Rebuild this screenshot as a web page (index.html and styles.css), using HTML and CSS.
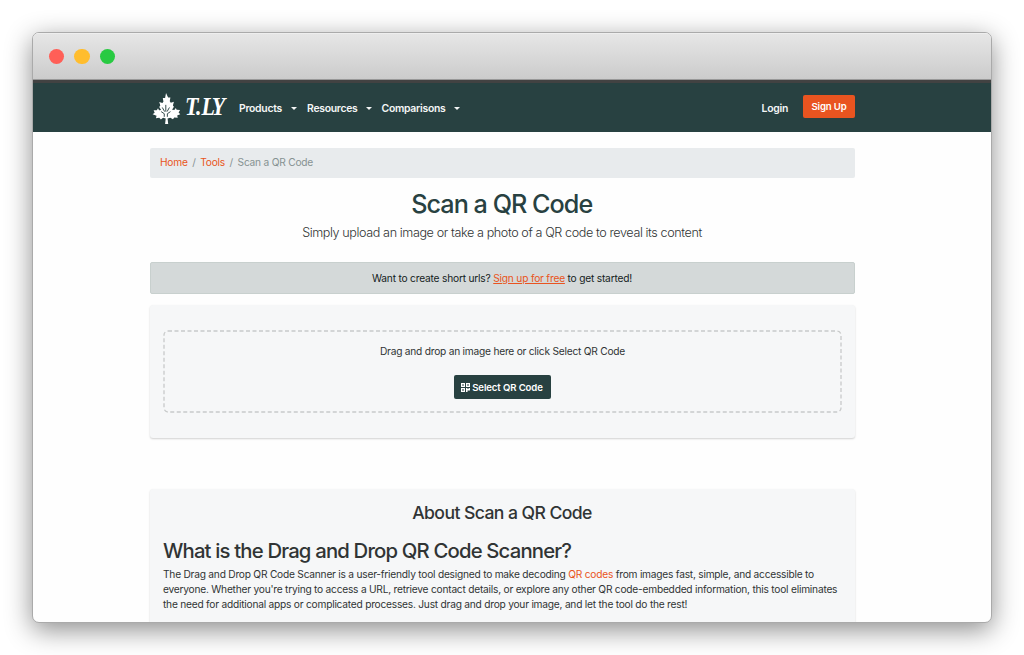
FILE: index.html
```html
<!DOCTYPE html>
<html lang="en">
<head>
<meta charset="UTF-8">
<meta name="viewport" content="width=device-width, initial-scale=1.0">
<title>Scan a QR Code</title>
<link rel="stylesheet" href="styles.css">
</head>
<body>

<div class="window">
    <div class="titlebar">
        <span class="dot red"></span>
        <span class="dot yellow"></span>
        <span class="dot green"></span>
    </div>

    <nav class="navbar">
        <div class="container nav-inner">
            <a class="brand" href="#">
                <svg class="leaf" viewBox="0 0 32 32" width="32" height="32">
                    <path fill="#fff" d="M16.5 1l2 4.500 2.200 0-.6 3.600 1 1.400 3-1-1 3.600 1 1.200-1.800 3 2.200.2 1.400-2 .8 1.800 3.300.2-1.400 2.400 1.600 1.600-3 1.200.6 2.300-3.400-.4-1.200 1.800-2.600-1.600-2.600.8.6 5.400h-3l.6-5.400-2.600-.8-2 1.800-1.600-1.800-3.200.6.6-2.400-3.800-1.400 2-1.600-1-2.200 3-.2 1.200-1.800 1 1.800 2-.2-1.800-2.800 1-1.400-1-3.400 3 1 1-1.400-.6-3.600 2.200 0z"/>
                    <path fill="none" stroke="#284141" stroke-width=".9" d="M16.3 12.5v6.500M12.900 15l2.300 4M19.800 15l-2.300 4M14.800 24v-3l-3-2M17.800 24v-3l3-2"/>
                </svg>
                <span class="brand-name">T<span class="brand-dot">.</span>LY</span>
            </a>
            <a class="nav-link products" href="#">Products</a>
            <a class="nav-link resources" href="#">Resources</a>
            <a class="nav-link comparisons" href="#">Comparisons</a>
            <a class="login" href="#">Login</a>
            <a class="btn btn-signup" href="#">Sign Up</a>
        </div>
    </nav>

    <main class="container">
        <div class="breadcrumb">
            <a href="#">Home</a><span class="sep">/</span><a href="#">Tools</a><span class="sep">/</span><span>Scan a QR Code</span>
        </div>

        <h1>Scan a QR Code</h1>
        <p class="lead">Simply upload an image or take a photo of a QR code to reveal its content</p>

        <div class="alert">Want to create short urls? <a href="#">Sign up for free</a> to get started!</div>

        <div class="card upload">
            <div class="dropzone">
                <svg class="dropzone-border" width="679" height="83">
                    <rect x="1" y="1" width="677" height="81" rx="4"/>
                </svg>
                <p>Drag and drop an image here or click Select QR Code</p>
                <button class="btn btn-select" type="button">
                    <svg viewBox="0 0 9 9" width="9" height="9">
                        <path fill="#fff" fill-rule="evenodd" d="M0 0h4v4H0zM1.300 1.300v1.400h1.400V1.300zM5 0h4v4H5zM6.300 1.300v1.400h1.400V1.300zM0 5h4v4H0zM1.300 6.300v1.400h1.400V6.300zM5 5h1.500v1h1V5H9v2.500H6.500V9H5z"/>
                    </svg>
                    <span>Select QR Code</span>
                </button>
            </div>
        </div>

        <div class="card about">
            <h3>About Scan a QR Code</h3>
            <h2>What is the Drag and Drop QR Code Scanner?</h2>
            <p>The Drag and Drop QR Code Scanner is a user-friendly tool designed to make decoding <a href="#">QR codes</a> from images fast, simple, and accessible to<br>
            everyone. Whether you're trying to access a URL, retrieve contact details, or explore any other QR code-embedded information, this tool eliminates<br>
            the need for additional apps or complicated processes. Just drag and drop your image, and let the tool do the rest!</p>
        </div>
    </main>
</div>

</body>
</html>
```

FILE: styles.css
```css
* {
    box-sizing: border-box;
}

body {
    margin: 0;
    padding: 32px;
    height: 655px;
    overflow: hidden;
    background-color: #fff;
    font-family: Inter, "Liberation Sans", sans-serif;
    font-size: 10.2px;
    line-height: 15.4px;
    letter-spacing: -0.23px;
    color: #303434;
}

h1, h2, h3, p {
    margin: 0;
    white-space: nowrap;
}

h1, h2, h3 {
    font-weight: 500;
}

a {
    color: #e95420;
    text-decoration: none;
}

.window {
    width: 960px;
    height: 591px;
    overflow: hidden;
    border: 1px solid #aaa;
    border-radius: 7px;
    background-color: #fefefe;
    box-shadow: 0 7px 27px rgba(0, 0, 0, 0.45);
}

.titlebar {
    display: flex;
    align-items: center;
    gap: 10px;
    height: 47px;
    padding: 0 0 1px 16px;
    background: linear-gradient(#e6e6e6, #cbcbcb);
    border-top: 1px solid #eee;
}

.dot {
    width: 15.4px;
    height: 15.4px;
    border-radius: 50%;
}

.red {
    background-color: #ff5f57;
}

.yellow {
    background-color: #ffbd2e;
}

.green {
    background-color: #28ca42;
}

.container {
    width: 705px;
    margin-left: 117px;
}

.navbar {
    height: 52px;
    background-color: #284141;
    border-top: 3px solid #424242;
    box-shadow: 0 -1px #999;
}

.nav-inner {
    display: flex;
    align-items: center;
    height: 49px;
    padding-top: 2px;
}

.brand {
    display: flex;
    align-items: center;
    width: 89px;
    color: #fff;
}

.leaf {
    transform: translate(-0.5px, -0.5px) scale(1.04);
}

.brand-name {
    margin: -4px 0 0 3px;
    font: italic bold 25px/25px "Liberation Serif", serif;
    letter-spacing: -2.8px;
    transform: scaleX(0.88);
    transform-origin: left;
}

.brand-dot {
    letter-spacing: 0;
}

.nav-link, .login {
    color: #f4f6f6;
    font-size: 10.4px;
    font-weight: 600;
    letter-spacing: -0.27px;
}

.nav-link {
    display: flex;
    align-items: center;
    justify-content: space-between;
}

.nav-link::after {
    content: "";
    border-top: 3px solid #f4f6f6;
    border-left: 3px solid transparent;
    border-right: 3px solid transparent;
}

.products {
    width: 58px;
}

.resources {
    width: 64.5px;
    margin-left: 10px;
}

.comparisons {
    width: 78px;
    margin-left: 10px;
}

.login {
    margin-left: auto;
}

.btn {
    display: flex;
    align-items: center;
    justify-content: center;
    border: none;
    border-radius: 2px;
    color: #fff;
    font: 600 9.6px/14px Inter, sans-serif;
    letter-spacing: -0.12px;
}

.btn-signup {
    width: 52px;
    height: 23px;
    margin: -4px 0 0 15px;
    padding-top: 1px;
    background-color: #e95420;
}

.breadcrumb {
    height: 30px;
    margin-top: 15.5px;
    padding: 7.5px 10px;
    border-radius: 2px;
    background-color: #e8ebed;
    color: #869292;
}

.sep {
    margin: 0 4.6px;
}

h1 {
    margin-top: 11px;
    text-align: center;
    color: #284141;
    font-size: 25.2px;
    line-height: 31px;
    letter-spacing: -0.98px;
    text-indent: -1.5px;
}

.lead {
    margin-top: 3.5px;
    text-align: center;
    font-size: 12.6px;
    font-weight: 300;
    line-height: 20px;
    letter-spacing: -0.4px;
    text-indent: -1px;
}

.alert {
    height: 32px;
    margin-top: 19px;
    padding-top: 8px;
    border: 1px solid #c8d0ce;
    border-radius: 2px;
    background-color: #d4d9d9;
    color: #152222;
    text-align: center;
    text-indent: -1px;
    letter-spacing: -0.2px;
}

.alert a {
    text-decoration: underline;
}

.card {
    border-radius: 3px;
    background-color: #f6f7f8;
    box-shadow: 0 1px 2px rgba(0, 0, 0, 0.18);
}

.upload {
    height: 133px;
    margin-top: 11px;
    padding: 25px 13px;
}

.dropzone {
    position: relative;
    display: flex;
    flex-direction: column;
    align-items: center;
    height: 83px;
    padding-top: 14px;
}

.dropzone-border {
    position: absolute;
    top: 0;
    left: 0;
    fill: none;
    stroke: #c8caca;
    stroke-width: 1.3;
    stroke-dasharray: 4 2.5;
}

.btn-select {
    gap: 2px;
    width: 97px;
    height: 24px;
    margin-top: 16px;
    padding: 1px 1px 0 0;
    background-color: #284141;
}

.about {
    height: 170px;
    margin-top: 51px;
    padding: 13px;
}

h3 {
    text-align: center;
    font-size: 17.6px;
    line-height: 22px;
    letter-spacing: -0.58px;
    text-indent: -1px;
}

h2 {
    margin: 13.5px 0 4px;
    font-size: 20.3px;
    line-height: 25px;
    letter-spacing: -0.82px;
}
```
